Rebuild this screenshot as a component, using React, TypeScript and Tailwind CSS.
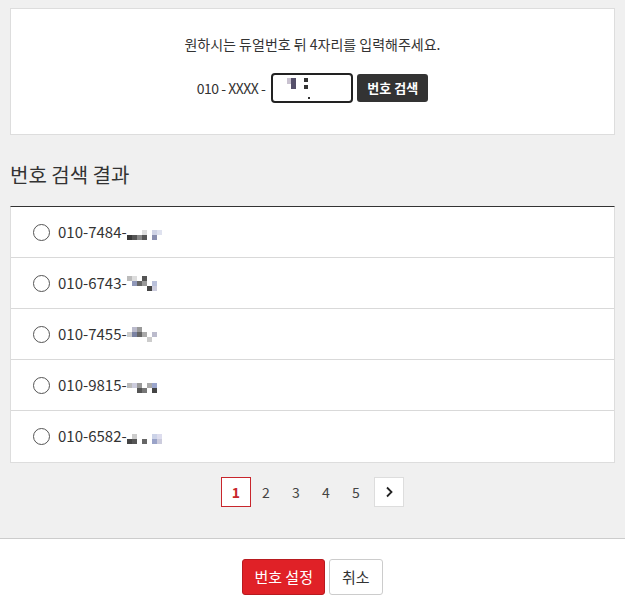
import { useState } from 'react';

const font = { fontFamily: '"Noto Sans CJK KR", "Noto Sans", sans-serif' };

// 모자이크 처리된 뒷자리 (픽셀 블록)
type Px = [number, number, string];

const masks: Px[][] = [
  [[0, 2, '#3a3a3a'], [1, 2, '#555'], [2, 2, '#888'], [3, 1, '#ddd'], [3, 2, '#555'], [5, 1, '#cfd3e6'], [5, 2, '#8a8fb0'], [6, 1, '#dfe2ef']],
  [[0, 0, '#bbb'], [1, 0, '#ddd'], [1, 1, '#8f97b8'], [2, 1, '#666'], [3, 0, '#555'], [3, 1, '#999'], [4, 2, '#444'], [5, 1, '#b9c0da'], [5, 2, '#ccd']],
  [[0, 1, '#ccc'], [1, 0, '#bbc'], [1, 1, '#7b83a3'], [2, 1, '#666'], [2, 0, '#999'], [3, 1, '#aaa'], [4, 2, '#ccc'], [5, 1, '#bbc']],
  [[0, 1, '#bbb'], [1, 1, '#ccd'], [2, 1, '#999'], [2, 2, '#555'], [3, 2, '#777'], [4, 1, '#aaa'], [5, 1, '#9aa5cc'], [5, 2, '#444']],
  [[0, 2, '#444'], [1, 1, '#ccc'], [1, 2, '#555'], [3, 2, '#666'], [5, 1, '#ccd3e8'], [5, 2, '#9aa3c8'], [6, 1, '#dde'], [6, 2, '#ccd']],
];

function Mask({ px }: { px: Px[] }) {
  return (
    <span className="relative inline-block w-[34px] h-[15px] align-middle">
      {px.map(([x, y, c], i) => (
        <span
          key={i}
          className="absolute w-[5px] h-[5px]"
          style={{ left: x * 5, top: y * 5, background: c }}
        />
      ))}
    </span>
  );
}

const results = ['010-7484-', '010-6743-', '010-7455-', '010-9815-', '010-6582-'];

export default function App() {
  const [selected, setSelected] = useState<number | null>(null);

  return (
    <div className="w-[625px] h-[605px] bg-[#f0f0f0] flex flex-col text-[#333]" style={font}>
      <div className="flex-1 px-[10px] pt-[8px]">
        <div className="bg-white border border-[#dddddd] h-[127px] flex flex-col items-center pt-[25px]">
          <p className="text-[14px] leading-[20px] text-[#333]">원하시는 듀얼번호 뒤 4자리를 입력해주세요.</p>
          <div className="flex items-center mt-[19px]">
            <span className="text-[14px] tracking-[-0.5px] mr-[6px]">010 - XXXX -</span>
            <div className="relative w-[82px] h-[30px] border-2 border-[#222] rounded-[4px] bg-white">
              <span className="absolute left-[14px] top-[3px] w-[6px] h-[6px] bg-[#c9c2d0]" />
              <span className="absolute left-[18px] top-[3px] w-[5px] h-[11px] bg-[#55506a]" />
              <span className="absolute left-[31px] top-[3px] w-[4px] h-[4px] bg-[#333]" />
              <span className="absolute left-[31px] top-[10px] w-[4px] h-[4px] bg-[#333]" />
              <span className="absolute left-[35px] top-[22px] w-[2px] h-[2px] bg-[#333]" />
            </div>
            <button className="ml-[4px] h-[28px] px-[10px] bg-[#333333] text-white text-[13px] font-bold rounded-[3px]">
              번호 검색
            </button>
          </div>
        </div>

        <h2 className="text-[20px] leading-[28px] mt-[26px] text-[#333]">번호 검색 결과</h2>

        <ul className="mt-[17px] bg-white border border-[#dddddd] border-t-[#333] border-t">
          {results.map((num, i) => (
            <li
              key={num}
              onClick={() => setSelected(i)}
              className="h-[51px] flex items-center pl-[22px] border-b border-[#d9d9d9] last:border-b-0 cursor-pointer"
            >
              <span className="w-[17px] h-[17px] rounded-full border border-[#555] bg-white flex items-center justify-center">
                {selected === i && <span className="w-[9px] h-[9px] rounded-full bg-[#333]" />}
              </span>
              <span className="ml-[8px] text-[15px] text-[#333]">{num}</span>
              <Mask px={masks[i]} />
            </li>
          ))}
        </ul>

        <div className="flex justify-center items-center mt-[14px] text-[14px]">
          <span className="w-[30px] h-[30px] border border-[#c8262c] text-[#c8262c] font-bold bg-white flex items-center justify-center">
            1
          </span>
          {[2, 3, 4, 5].map((n) => (
            <span key={n} className="w-[30px] h-[30px] flex items-center justify-center text-[#444]">
              {n}
            </span>
          ))}
          <span className="ml-[3px] w-[30px] h-[30px] border border-[#dddddd] bg-white flex items-center justify-center">
            <svg width="10" height="12" viewBox="0 0 10 12" fill="none">
              <path d="M3 1.5 L7.5 6 L3 10.5" stroke="#222" strokeWidth="1.8" />
            </svg>
          </span>
        </div>
      </div>

      <div className="h-[67px] bg-white border-t border-[#cccccc] flex justify-center items-start pt-[20px] gap-[4px]">
        <button className="h-[36px] px-[11px] bg-[#e02127] border border-[#b81a1f] text-white text-[15px] rounded-[3px]">
          번호 설정
        </button>
        <button className="h-[36px] px-[12px] bg-white border border-[#cccccc] text-[#333] text-[15px] rounded-[3px]">
          취소
        </button>
      </div>
    </div>
  );
}
